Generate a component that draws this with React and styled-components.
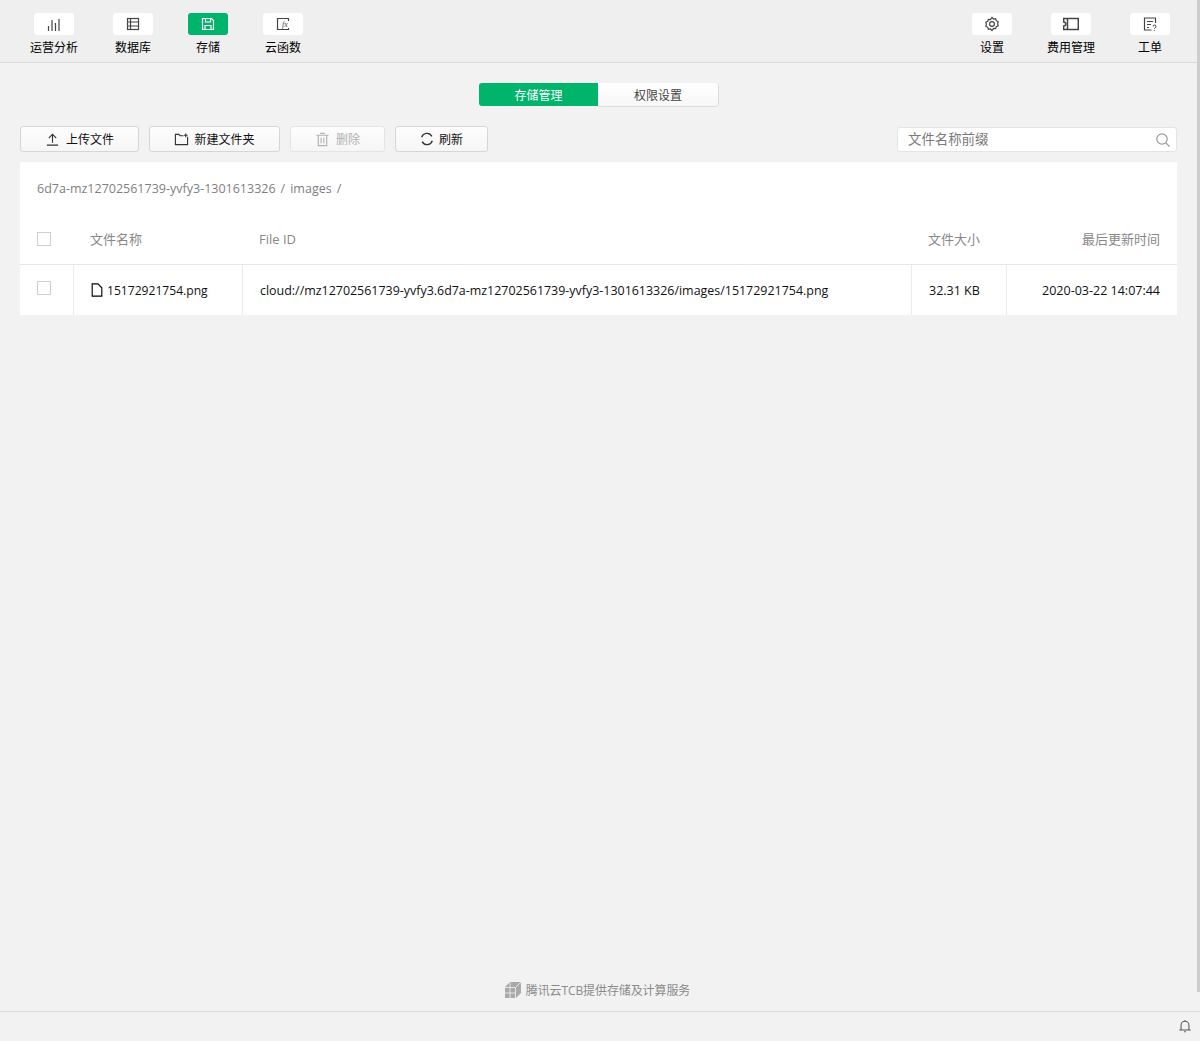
import styled, { createGlobalStyle } from "styled-components"

const GlobalStyle = createGlobalStyle`
    html, body {
        margin: 0;
        padding: 0;
        background: #f2f2f2;
        overflow: hidden;
    }
    * {
        box-sizing: border-box;
    }
`

const Page = styled.div`
    width: 1200px;
    height: 1041px;
    display: flex;
    flex-direction: column;
    font-family: "Open Sans", "Noto Sans CJK SC", sans-serif;
    font-size: 12px;
    color: #000;
    position: relative;
`

const Scrollbar = styled.div`
    position: absolute;
    right: 0;
    top: 0;
    width: 3px;
    height: 992px;
    background: #cdcdcd;
`

const Header = styled.header`
    height: 63px;
    flex: none;
    background: #efefef;
    border-bottom: 1px solid #d9d9d9;
    padding: 13px 30px 0;
    display: flex;
    justify-content: space-between;
`

const NavGroup = styled.nav`
    display: flex;
    gap: 35px;
`

const NavItem = styled.div`
    display: flex;
    flex-direction: column;
    align-items: center;
    gap: 3px;
    line-height: 20px;
`

const NavIcon = styled.div`
    width: 40px;
    height: 22px;
    border-radius: 3px;
    background: ${(p) => (p.$active ? "#00b46c" : "#fff")};
    color: ${(p) => (p.$active ? "#fff" : "#444")};
    display: flex;
    align-items: center;
    justify-content: center;
`

const Main = styled.main`
    flex: 1;
    padding: 20px 23px 0 20px;
    display: flex;
    flex-direction: column;
`

const Tabs = styled.div`
    display: flex;
    justify-content: center;
`

const Tab = styled.div`
    width: ${(p) => p.$width}px;
    height: 23px;
    line-height: 26px;
    text-align: center;
    border-radius: ${(p) => (p.$active ? "3px 0 0 3px" : "0 3px 3px 0")};
    background: ${(p) => (p.$active ? "#00b46c" : "linear-gradient(#fff, #f7f7f7)")};
    color: ${(p) => (p.$active ? "#fff" : "#444")};
    box-shadow: ${(p) => (p.$active ? "none" : "0 1px 0 #dcdcdc, 1px 0 0 #dcdcdc")};
`

const Toolbar = styled.div`
    display: flex;
    align-items: center;
    justify-content: space-between;
    margin-top: 20px;
    height: 26px;
`

const ButtonRow = styled.div`
    display: flex;
    gap: 10px;
`

const Button = styled.button`
    width: ${(p) => p.$width}px;
    height: 26px;
    padding: 0;
    border: 1px solid ${(p) => (p.$disabled ? "#e4e4e4" : "#d6d6d6")};
    border-radius: 3px;
    background: linear-gradient(#fdfdfd, #f6f6f6);
    color: ${(p) => (p.$disabled ? "#b2b2b2" : "#111")};
    font: inherit;
    display: flex;
    align-items: center;
    justify-content: center;
    gap: ${(p) => p.$gap}px;
    svg {
        color: ${(p) => (p.$disabled ? "#b2b2b2" : "#333")};
    }
`

const Search = styled.div`
    width: 280px;
    height: 25px;
    margin-top: 1px;
    border: 1px solid #e4e4e4;
    border-radius: 3px;
    background: #fff;
    padding: 0 5px 0 10px;
    display: flex;
    align-items: center;
    justify-content: space-between;
    font-size: 13.4px;
    color: #7a7a7a;
    line-height: 25px;
    svg {
        color: #999;
    }
`

const Card = styled.section`
    margin-top: 10px;
    background: #fff;
`

const Breadcrumb = styled.div`
    height: 52px;
    padding: 0 17px;
    display: flex;
    align-items: center;
    gap: 5px;
    font-size: 12.5px;
    color: #7f7f7f;
`

const Row = styled.div`
    display: grid;
    grid-template-columns: ${(p) => (p.$head ? "53px 169px 669px 95px 171px" : "54px 169px 669px 95px 170px")};
    height: ${(p) => p.$height}px;
    border-bottom: ${(p) => (p.$head ? "1px solid #e7e7e7" : "none")};
`

const Cell = styled.div`
    display: flex;
    align-items: center;
    gap: 4px;
    padding: 0 17px ${(p) => (p.$cjk ? 2 : 0)}px 17px;
    justify-content: ${(p) => (p.$right ? "flex-end" : "flex-start")};
    font-size: ${(p) => (p.$head ? "13px" : p.$size || "12.5px")};
    color: ${(p) => (p.$head ? "#888" : "#111")};
    border-right: ${(p) => (p.$line ? "1px solid #ececec" : "none")};
    white-space: nowrap;
`

const FileCell = styled(Cell)`
    padding-left: 16px;
    gap: 3px;
    svg {
        color: #000;
    }
`

const Check = styled.span`
    width: 14px;
    height: 14px;
    border: 1px solid #cfcfcf;
    background: #fff;
    margin-top: ${(p) => p.$top || 0}px;
`

const Footer = styled.div`
    height: 30px;
    margin-top: auto;
    margin-bottom: 6px;
    padding-right: 2px;
    display: flex;
    align-items: center;
    justify-content: center;
    gap: 5px;
    color: #8a8a8a;
    font-size: 12px;
    letter-spacing: -0.1px;
`

const StatusBar = styled.div`
    height: 30px;
    flex: none;
    border-top: 1px solid #dcdcdc;
    background: #f2f2f2;
    padding: 7px 8px 0 0;
    display: flex;
    justify-content: flex-end;
    color: #555;
`

const Svg = ({ size = 16, children, width = 1.2 }) => (
    <svg width={size} height={size} viewBox="0 0 16 16" fill="none" stroke="currentColor" strokeWidth={width}>
        {children}
    </svg>
)

const navLeft = [
    {
        label: "运营分析",
        icon: <path d="M2.500 15V10M6 15V4M9.500 15V7M13 15V3" />,
    },
    {
        label: "数据库",
        icon: (
            <>
                <rect x="2.500" y="2.500" width="11" height="11" />
                <path d="M5.500 2.500v11M2.500 6h11M2.500 10h11" />
            </>
        ),
    },
    {
        label: "存储",
        active: true,
        icon: (
            <>
                <path d="M2.500 2.500h9l2 2v9h-11z" />
                <path d="M5.500 2.500v3.500h5V2.500M5 13.500V9.500h6v4" />
            </>
        ),
    },
    {
        label: "云函数",
        icon: (
            <>
                <path d="M13.500 5V2.500h-11v11h11V12" />
                <text x="7" y="11" fontSize="8" fontStyle="italic" fontFamily="Liberation Serif, serif" fill="currentColor" stroke="none">fx</text>
            </>
        ),
    },
]

const navRight = [
    {
        label: "设置",
        icon: (
            <>
                <path d="M8 1.500l1.500 1.500 2.100-.3.7 2 1.900 1-.6 2 .6 2-1.900 1-.7 2-2.100-.3L8 14.500l-1.500-1.500-2.100.3-.7-2-1.900-1 .6-2-.6-2 1.900-1 .7-2 2.100.3z" />
                <circle cx="8" cy="8" r="2.400" />
            </>
        ),
    },
    {
        label: "费用管理",
        icon: <path d="M.7 2.500h14.600v11H.7v-3.500a2 2 0 0 0 0-4zM4.500 2.500v11" />,
        heavy: true,
    },
    {
        label: "工单",
        icon: (
            <>
                <path d="M13.500 7V2h-11v12h7" />
                <path d="M5 5.500h6M5 8.500h4M5 11.500h2" />
                <path d="M11 10.500a1.500 1.500 0 1 1 2 1.400c-.5.300-.7.500-.7 1M12.300 14.200v.8" strokeWidth="1" />
            </>
        ),
    },
]

function Nav({ items }) {
    return (
        <NavGroup>
            {items.map((item) => (
                <NavItem key={item.label}>
                    <NavIcon $active={item.active}>
                        <Svg size={16} width={item.heavy ? 1.5 : 1.2}>{item.icon}</Svg>
                    </NavIcon>
                    {item.label}
                </NavItem>
            ))}
        </NavGroup>
    )
}

export default function App() {
    return (
        <Page>
            <GlobalStyle />
            <Header>
                <Nav items={navLeft} />
                <Nav items={navRight} />
            </Header>
            <Main>
                <Tabs>
                    <Tab $active $width={119}>存储管理</Tab>
                    <Tab $width={120}>权限设置</Tab>
                </Tabs>
                <Toolbar>
                    <ButtonRow>
                        <Button $width={119} $gap={6}>
                            <Svg size={15}><path d="M2 14h12M8 11.500V2.500M4 6.500l4-4 4 4" /></Svg>
                            上传文件
                        </Button>
                        <Button $width={131} $gap={5}>
                            <Svg size={15}><path d="M10 4H6.500L5 2.500H1.500v11h13V5M12.500 1.500v4M10.500 3.500h4" /></Svg>
                            新建文件夹
                        </Button>
                        <Button $width={95} $gap={6} $disabled>
                            <Svg size={15}><path d="M1.500 3.500h13M3.500 3.500V14.500h9V3.500M5.500 1.500h5M6.500 6v6M9.500 6v6" /></Svg>
                            删除
                        </Button>
                        <Button $width={93} $gap={5}>
                            <Svg size={14} width={1.6}><path d="M13.500 5A6.200 6.200 0 0 0 2 6M2.500 11a6.200 6.200 0 0 0 11.500-1" /></Svg>
                            刷新
                        </Button>
                    </ButtonRow>
                    <Search>
                        文件名称前缀
                        <Svg size={16}><circle cx="7" cy="7" r="5.200" /><path d="M10.800 10.800l3.700 3.700" /></Svg>
                    </Search>
                </Toolbar>
                <Card>
                    <Breadcrumb>
                        <span>6d7a-mz12702561739-yvfy3-1301613326</span>
                        <span>/</span>
                        <span>images</span>
                        <span>/</span>
                    </Breadcrumb>
                    <Row $height={51} $head>
                        <Cell $head><Check /></Cell>
                        <Cell $head $cjk>文件名称</Cell>
                        <Cell $head>File ID</Cell>
                        <Cell $head $cjk>文件大小</Cell>
                        <Cell $head $cjk $right>最后更新时间</Cell>
                    </Row>
                    <Row $height={50}>
                        <Cell $line><Check $top={-4} /></Cell>
                        <FileCell $line $size="12.1px">
                            <Svg size={14} width={1.3}><path d="M2.500 1h6.500l4.500 4.500v9.500h-11z" /></Svg>
                            15172921754.png
                        </FileCell>
                        <Cell $line $size="12.45px">cloud://mz12702561739-yvfy3.6d7a-mz12702561739-yvfy3-1301613326/images/15172921754.png</Cell>
                        <Cell $line>32.31 KB</Cell>
                        <Cell $right>2020-03-22 14:07:44</Cell>
                    </Row>
                </Card>
                <Footer>
                    <svg width="16" height="16" viewBox="0 0 16 16">
                        <path d="M0 5L5 0h11v11l-5 5H0z" fill="#a9a9a9" />
                        <path d="M0 5.500h10.500V16M10.500 5.500L16 0M0 11h10.500M5 5.500V16M5 5.500V0" stroke="#f2f2f2" strokeWidth="0.8" fill="none" />
                    </svg>
                    腾讯云TCB提供存储及计算服务
                </Footer>
            </Main>
            <StatusBar>
                <Svg size={14}><path d="M3.500 12.500V7a4.500 4.500 0 0 1 9 0v5.500M1.500 12.500h13M8 2.500V1M7 14.500h2" /></Svg>
            </StatusBar>
            <Scrollbar />
        </Page>
    )
}
